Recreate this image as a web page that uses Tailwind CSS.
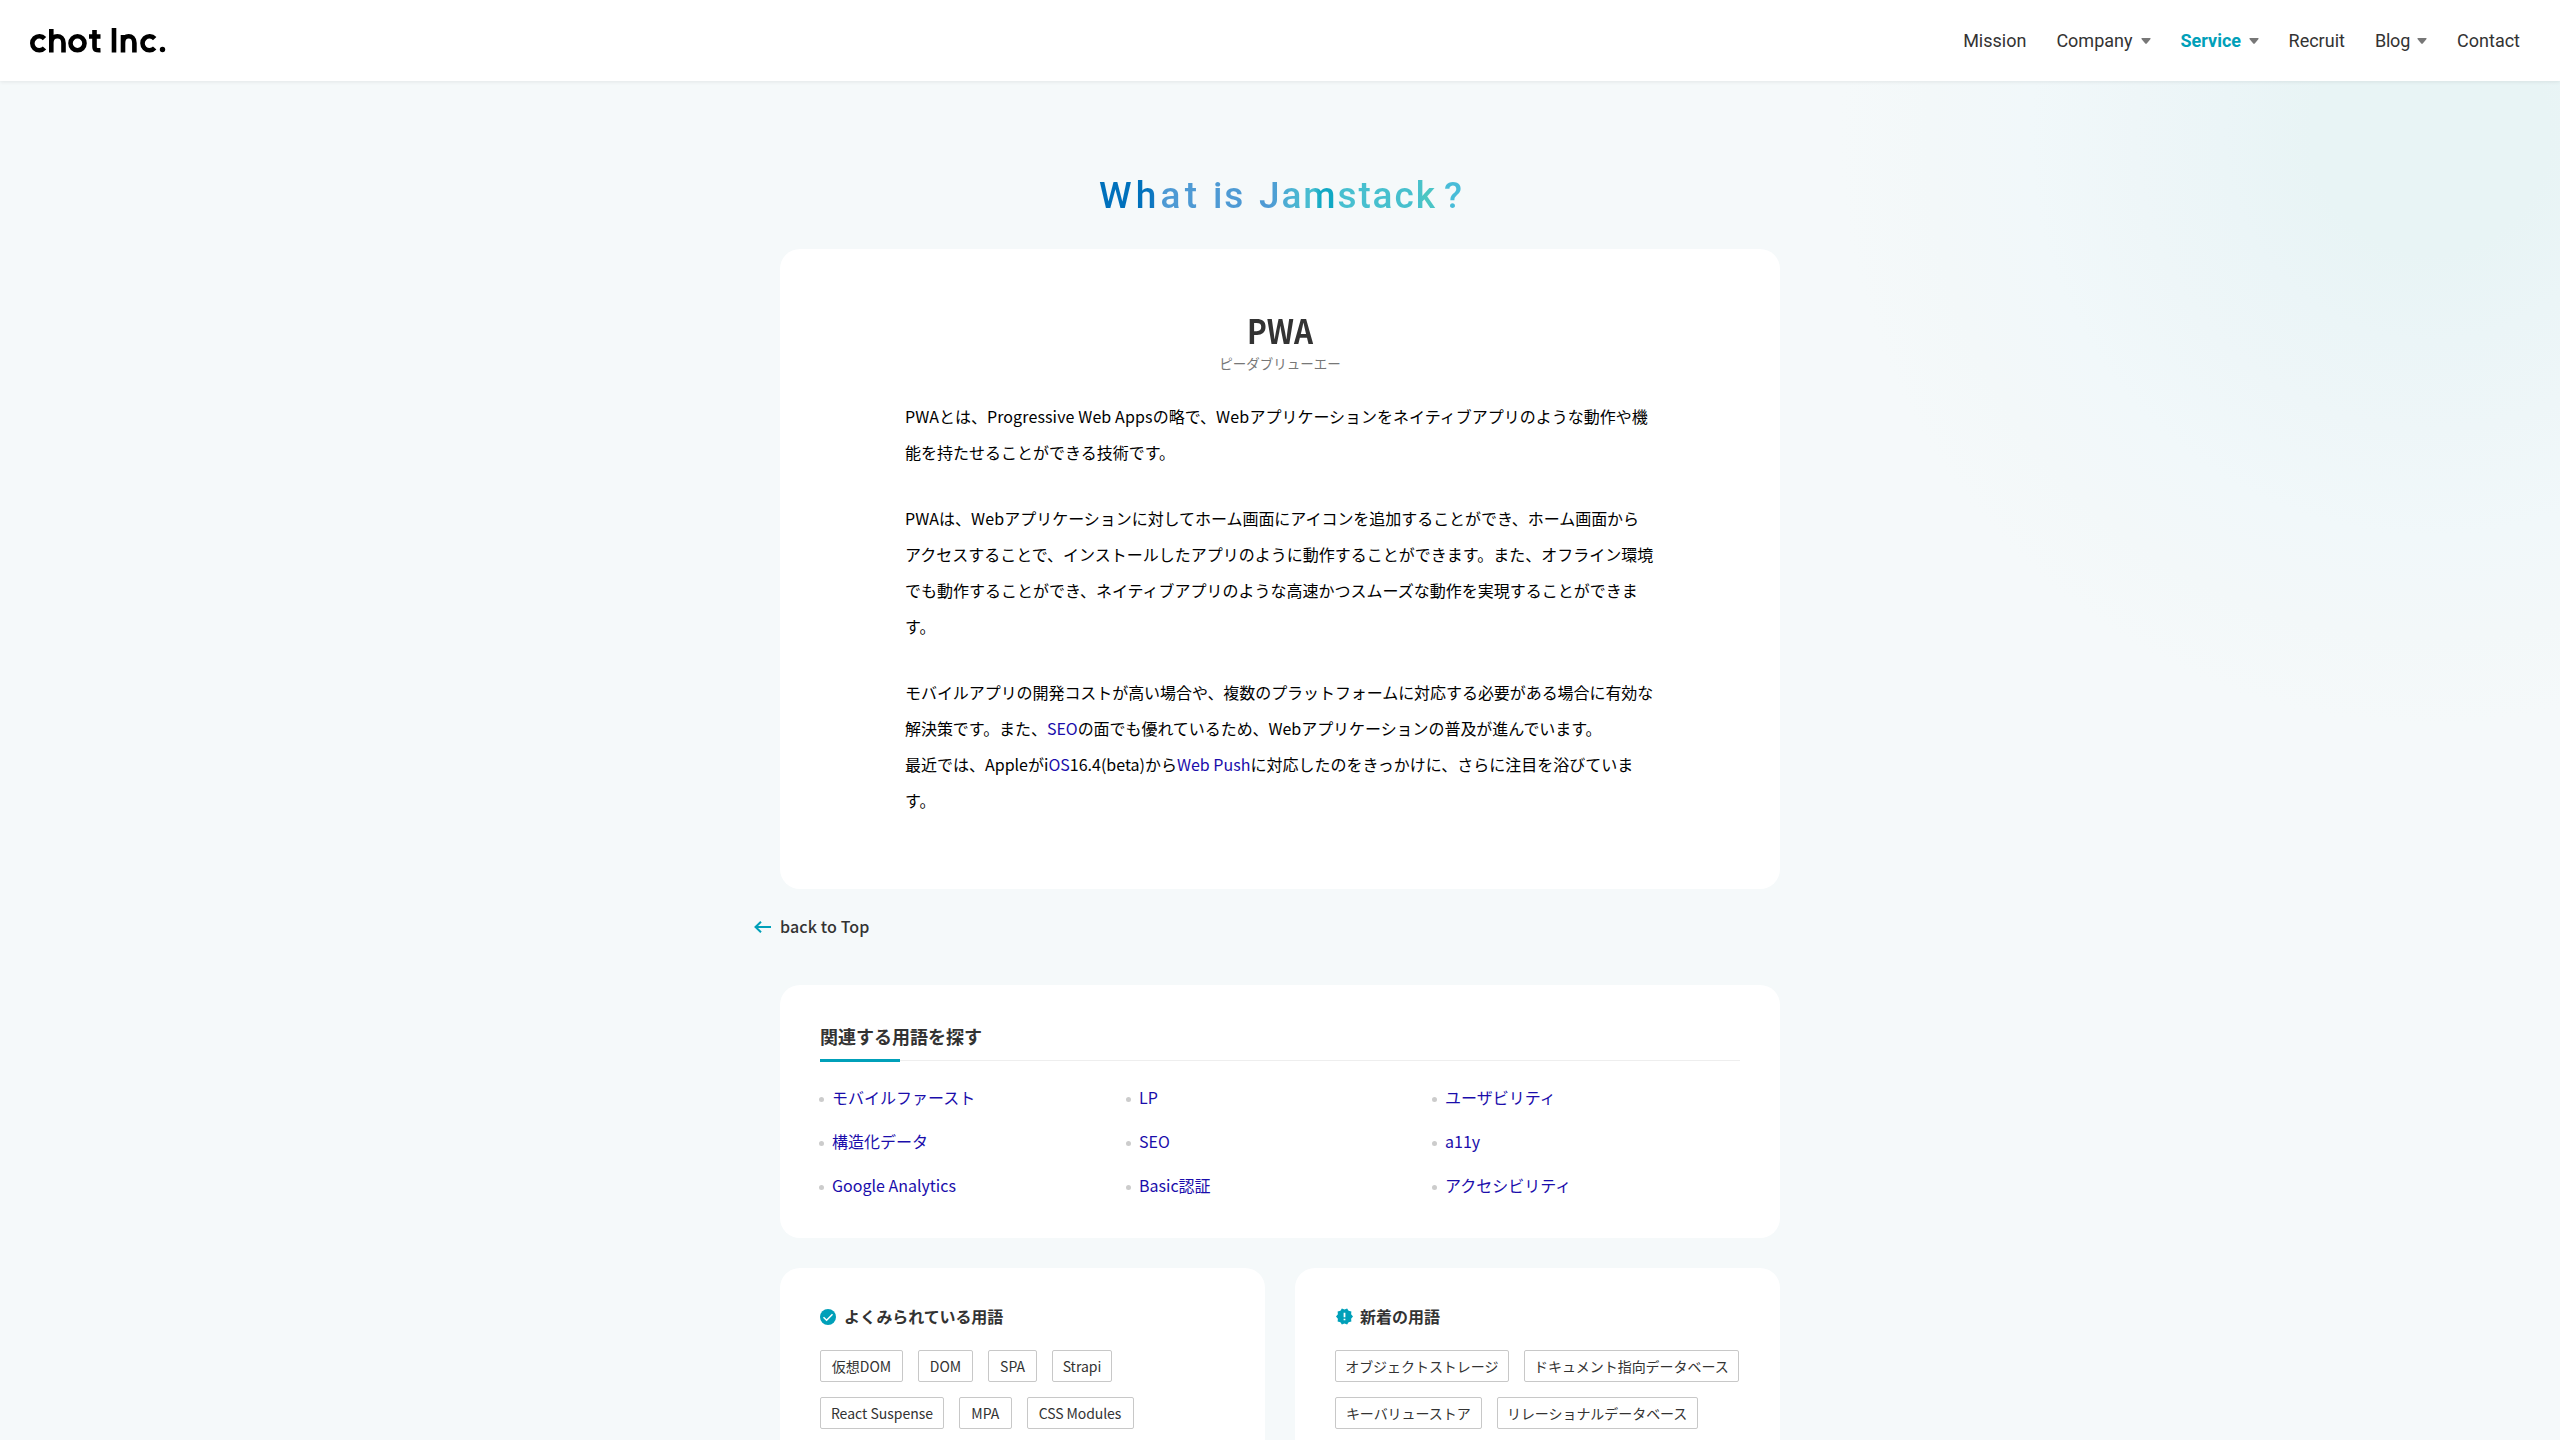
<!DOCTYPE html>
<html lang="ja">
<head>
<meta charset="utf-8">
<title>PWA | chot Inc.</title>
<script src="https://cdn.jsdelivr.net/npm/@tailwindcss/browser@4"></script>
</head>
<body class="h-[1440px] w-[2560px] overflow-hidden bg-[#f5f9fa] font-['Noto_Sans_CJK_JP',sans-serif] text-[#333]">
<div class="flex h-[1440px] flex-col overflow-hidden bg-[radial-gradient(circle_590px_at_2430px_135px,#e8f4f5_0%,#e8f4f5_20%,#ebf5f7_35%,#eef6f8_50%,#f1f8fa_68%,#f3f8f9_85%,#f5f9fa_100%)]">
  <header class="flex h-[81px] shrink-0 items-center justify-between bg-white pr-10 pl-[30px] shadow-[0_1px_4px_rgba(0,0,0,0.08)]">
    <svg class="h-[30px] w-[140px]" viewBox="0 0 140 30" role="img" aria-label="chot Inc." fill="none" stroke="#000" stroke-width="4.6">
      <path d="M14.5 12.6A7 7 0 1 0 14.5 22"/>
      <path d="M21.3 3V26.5M21.3 17C21.3 8 33.5 8 33.5 17V26.5"/>
      <circle cx="47.5" cy="17.3" r="7"/>
      <path d="M64.5 4V20.5C64.5 24 66 24.4 70.500 24.2M59 10.500H70.500"/>
      <path d="M84 2V26.5M93 9V26.5M93 17C93 8 104.4 8 104.4 17V26.5"/>
      <path d="M124.7 12.6A7 7 0 1 0 124.7 22"/>
      <circle cx="132.500" cy="23.500" r="2.700" fill="#000" stroke="none"/>
    </svg>
    <nav class="flex items-center gap-[30px] font-[Roboto,sans-serif] text-[18px]">
      <a>Mission</a>
      <a class="flex items-center gap-[8px]">Company<svg class="h-[6px] w-[10px]" viewBox="0 0 10 6" fill="#777"><path d="M1 0H9Q10 0 9.500 1L6 5.300Q5 6.400 4 5.300L.5 1Q0 0 1 0Z"/></svg></a>
      <a class="flex items-center gap-[7.500px] font-bold text-[#00a0b9]">Service<svg class="h-[6px] w-[10px]" viewBox="0 0 10 6" fill="#777"><path d="M1 0H9Q10 0 9.500 1L6 5.300Q5 6.400 4 5.300L.5 1Q0 0 1 0Z"/></svg></a>
      <a>Recruit</a>
      <a class="flex items-center gap-[7px] tracking-[-0.200px]">Blog<svg class="h-[6px] w-[10px]" viewBox="0 0 10 6" fill="#777"><path d="M1 0H9Q10 0 9.500 1L6 5.300Q5 6.400 4 5.300L.5 1Q0 0 1 0Z"/></svg></a>
      <a>Contact</a>
    </nav>
  </header>
  <main class="mx-auto flex w-[1000px] flex-col">
    <h1 class="mt-[91px] flex h-[47px] pl-[319px] font-[Roboto,sans-serif] text-[37px] leading-[48px] font-medium whitespace-nowrap"><span class="flex bg-[linear-gradient(90deg,#0071bc_0%,#0071bc_13%,#1a7ec6_16%,#4e9ad4_18%,#4e9ad4_47%,#4cb2d3_53%,#47bfd0_59%,#10a8c4_61%,#10a8c4_65%,#47bfd0_66%,#47c0cd_88%,#4cc8c0_90%,#48bcd8_96%)] bg-clip-text text-transparent"><span class="w-[114px] tracking-[4.200px]">What </span><span class="w-[46px] tracking-[1.800px]">is </span><span class="w-[185px] tracking-[1.900px]">Jamstack</span><span class="w-[18px]">?</span></span></h1>
    <article class="mt-[30px] h-[640px] rounded-[20px] bg-white px-[125px] pt-[56px]">
      <h2 class="scale-x-[0.9] text-center text-[33px] leading-[50px] font-bold">PWA</h2>
      <p class="-mt-[2px] text-center text-[13.500px] leading-[20px] text-[#777]">ピーダブリューエー</p>
      <div class="mt-[25px] flex flex-col gap-[30px] text-[16px] leading-[36px] whitespace-nowrap text-black">
        <p>PWAとは、<span class="tracking-[0.12px]">Progressive Web Apps</span>の略で、<span class="tracking-[0.2px]">Web</span>アプリケーションをネイティブアプリのような動作や機<br>能を持たせることができる技術です。</p>
        <p>PWAは、<span class="tracking-[0.2px]">Web</span><span class="tracking-[-0.04px]">アプリケーションに対してホーム画面にアイコンを追加することができ、ホーム画面から</span><br>アクセスすることで、インストールしたアプリのように動作することができます。また、オフライン環境<br>でも動作することができ、ネイティブアプリのような高速かつスムーズな動作を実現することができま<br>す。</p>
        <p><span class="tracking-[-0.06px]">モバイルアプリの開発コストが高い場合や、複数のプラットフォームに対応する必要がある場合に有効な</span><br><span class="tracking-[-0.05px]">解決策です。また、<a class="text-[#1a0dab]">SEO</a>の面でも優れているため、Webアプリケーションの普及が進んでいます。</span><br>最近では、Appleがi<a class="text-[#1a0dab]">OS</a>16.4(beta)から<a class="text-[#1a0dab]">Web Push</a>に対応したのをきっかけに、さらに注目を浴びていま<br>す。</p>
      </div>
    </article>
    <a class="mt-[23px] -ml-[26px] flex h-[28px] items-center gap-[9px] text-[16px] leading-[28px] font-medium tracking-[0.130px]"><svg class="mt-[1px] h-[12px] w-[17px]" viewBox="0 0 17 12" fill="none" stroke="#00a0b9" stroke-width="2"><path d="M17 6H1.500M7 .7L1.500 6L7 11.300"/></svg>back to Top</a>
    <section class="mt-[45px] h-[253px] rounded-[20px] bg-white px-[40px] pt-[35px]">
      <h3 class="h-[41px] border-b border-[#eee] text-[18px] leading-[33px] font-bold">関連する用語を探す</h3>
      <div class="-mt-[2px] h-[3px] w-[80px] bg-[#00a0b9]"></div>
      <ul class="mt-[13px] -ml-[1px] grid grid-cols-[307px_306px_306px] text-[16px] leading-[44px] text-[#1a0dab]">
        <li class="flex items-center gap-[8px]"><i class="mt-[5px] size-[5px] rounded-full bg-[#ccc]"></i>モバイルファースト</li>
        <li class="flex items-center gap-[8px]"><i class="mt-[5px] size-[5px] rounded-full bg-[#ccc]"></i>LP</li>
        <li class="flex items-center gap-[8px]"><i class="mt-[5px] size-[5px] rounded-full bg-[#ccc]"></i>ユーザビリティ</li>
        <li class="flex items-center gap-[8px]"><i class="mt-[5px] size-[5px] rounded-full bg-[#ccc]"></i>構造化データ</li>
        <li class="flex items-center gap-[8px]"><i class="mt-[5px] size-[5px] rounded-full bg-[#ccc]"></i>SEO</li>
        <li class="flex items-center gap-[8px]"><i class="mt-[5px] size-[5px] rounded-full bg-[#ccc]"></i>a11y</li>
        <li class="flex items-center gap-[8px]"><i class="mt-[5px] size-[5px] rounded-full bg-[#ccc]"></i>Google Analytics</li>
        <li class="flex items-center gap-[8px]"><i class="mt-[5px] size-[5px] rounded-full bg-[#ccc]"></i>Basic認証</li>
        <li class="flex items-center gap-[8px]"><i class="mt-[5px] size-[5px] rounded-full bg-[#ccc]"></i>アクセシビリティ</li>
      </ul>
    </section>
    <div class="mt-[30px] grid grid-cols-2 gap-[30px]">
      <section class="h-[260px] rounded-[20px] bg-white px-[40px] pt-[33px]">
        <h3 class="flex h-[30px] items-center gap-[8px] text-[16px] leading-[30px] font-bold tracking-[-0.100px]"><svg class="mt-[1px] size-[16px]" viewBox="0 0 16 16"><circle cx="8" cy="8" r="8" fill="#00a0b9"/><path d="M3.500 8.200L6.600 11.200L12.500 5.200" fill="none" stroke="#fff" stroke-width="1.500"/></svg>よくみられている用語</h3>
        <div class="mt-[19px] flex flex-col gap-[15px] text-[14px] leading-[30px]">
          <div class="flex gap-[15px]"><span class="w-[83px] rounded-[2px] border border-[#c8c8c8] text-center">仮想DOM</span><span class="w-[55px] rounded-[2px] border border-[#c8c8c8] text-center">DOM</span><span class="w-[49px] rounded-[2px] border border-[#c8c8c8] text-center">SPA</span><span class="w-[60px] rounded-[2px] border border-[#c8c8c8] text-center">Strapi</span></div>
          <div class="flex gap-[15px]"><span class="w-[124px] rounded-[2px] border border-[#c8c8c8] text-center">React Suspense</span><span class="w-[52.500px] rounded-[2px] border border-[#c8c8c8] text-center">MPA</span><span class="w-[107px] rounded-[2px] border border-[#c8c8c8] text-center tracking-[-0.100px]">CSS Modules</span></div>
        </div>
      </section>
      <section class="h-[260px] rounded-[20px] bg-white px-[40px] pt-[33px]">
        <h3 class="flex h-[30px] items-center gap-[7px] text-[16px] leading-[30px] font-bold"><svg class="mt-[1px] ml-[1px] size-[17px]" viewBox="1 1 22 22"><path fill="#00a0b9" d="M23 12l-2.440-2.780.34-3.680-3.610-.82-1.890-3.180L12 3 8.600 1.540 6.710 4.720l-3.610.81.34 3.680L1 12l2.440 2.780-.34 3.690 3.610.82 1.890 3.180L12 21l3.400 1.460 1.890-3.180 3.610-.82-.34-3.680L23 12z"/><path d="M12 7V13M12 15V17" stroke="#fff" stroke-width="2.300"/></svg>新着の用語</h3>
        <div class="mt-[19px] flex flex-col gap-[15px] text-[14px] leading-[30px] tracking-[-0.050px] whitespace-nowrap">
          <div class="flex gap-[15px]"><span class="w-[173.600px] rounded-[2px] border border-[#c8c8c8] text-center">オブジェクトストレージ</span><span class="w-[215.400px] rounded-[2px] border border-[#c8c8c8] text-center">ドキュメント指向データベース</span></div>
          <div class="flex gap-[15px]"><span class="w-[146.500px] rounded-[2px] border border-[#c8c8c8] text-center">キーバリューストア</span><span class="w-[201.300px] rounded-[2px] border border-[#c8c8c8] text-center">リレーショナルデータベース</span></div>
        </div>
      </section>
    </div>
  </main>
</div>
</body>
</html>
